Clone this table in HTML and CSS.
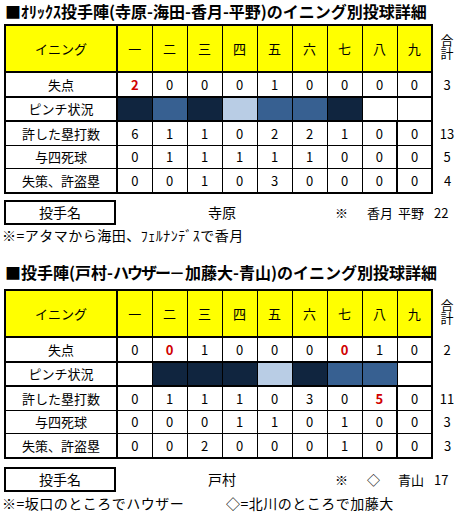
FILE: index.html
```html
<!DOCTYPE html>
<html lang="ja">
<head>
<meta charset="utf-8">
<link rel="stylesheet" href="styles.css">
</head>
<body>
<div class="page">
  <section class="block">
    <h1 class="title">■ｵﾘｯｸｽ投手陣(寺原-海田-香月-平野)のイニング別投球詳細</h1>
    <table class="g">
      <colgroup><col class="cl"><col class="cn"><col class="cn"><col class="cn"><col class="cn"><col class="cn"><col class="cn"><col class="cn"><col class="cn"><col class="cn"><col class="ct"></colgroup>
      <tr class="hd thick">
        <td class="lab">イニング</td><td>一</td><td>二</td><td>三</td><td>四</td><td>五</td><td>六</td><td>七</td><td>八</td><td class="c9">九</td><td class="tot"><span class="stack">合計</span></td>
      </tr>
      <tr class="r1 thick">
        <td class="lab">失点</td><td class="red">2</td><td>0</td><td>0</td><td>0</td><td>1</td><td>0</td><td>0</td><td>0</td><td class="c9">0</td><td class="tot">3</td>
      </tr>
      <tr class="r2 thick">
        <td class="lab">ピンチ状況</td><td class="d"></td><td class="m"></td><td class="d"></td><td class="l"></td><td class="m"></td><td class="m"></td><td class="d"></td><td></td><td class="c9"></td><td class="tot"></td>
      </tr>
      <tr class="r3">
        <td class="lab">許した塁打数</td><td>6</td><td>1</td><td>1</td><td>0</td><td>2</td><td>2</td><td>1</td><td class="c8">0</td><td class="c9">0</td><td class="tot">13</td>
      </tr>
      <tr class="r4">
        <td class="lab">与四死球</td><td>0</td><td>1</td><td>1</td><td>1</td><td>1</td><td>1</td><td>0</td><td class="c8">0</td><td class="c9">0</td><td class="tot">5</td>
      </tr>
      <tr class="r5 last">
        <td class="lab">失策、許盗塁</td><td>0</td><td>0</td><td>1</td><td>0</td><td>3</td><td>0</td><td>0</td><td class="c8">0</td><td class="c9">0</td><td class="tot">4</td>
      </tr>
    </table>
    <div class="pitchers">
      <div class="pbox">投手名</div>
      <span class="p-main">寺原</span>
      <span class="p-mark">※</span>
      <span class="p-a">香月</span>
      <span class="p-b">平野</span>
      <span class="p-tot">22</span>
    </div>
    <p class="note">※=アタマから海田、ﾌｪﾙﾅﾝﾃﾞｽで香月</p>
  </section>

  <section class="block second">
    <h1 class="title">■投手陣(戸村-<span class="narrow">ハウザー</span>－加藤大-青山)のイニング別投球詳細</h1>
    <table class="g">
      <colgroup><col class="cl"><col class="cn"><col class="cn"><col class="cn"><col class="cn"><col class="cn"><col class="cn"><col class="cn"><col class="cn"><col class="cn"><col class="ct"></colgroup>
      <tr class="hd thick">
        <td class="lab">イニング</td><td>一</td><td>二</td><td>三</td><td>四</td><td>五</td><td>六</td><td>七</td><td>八</td><td class="c9">九</td><td class="tot"><span class="stack">合計</span></td>
      </tr>
      <tr class="r1 thick">
        <td class="lab">失点</td><td>0</td><td class="red">0</td><td>1</td><td>0</td><td>0</td><td>0</td><td class="red">0</td><td>1</td><td class="c9">0</td><td class="tot">2</td>
      </tr>
      <tr class="r2 thick">
        <td class="lab">ピンチ状況</td><td></td><td class="d"></td><td class="d"></td><td class="d"></td><td class="l"></td><td class="d"></td><td class="m"></td><td class="m"></td><td class="c9"></td><td class="tot"></td>
      </tr>
      <tr class="r3">
        <td class="lab">許した塁打数</td><td>0</td><td>1</td><td>1</td><td>1</td><td>0</td><td>3</td><td>0</td><td class="c8 red">5</td><td class="c9">0</td><td class="tot">11</td>
      </tr>
      <tr class="r4">
        <td class="lab">与四死球</td><td>0</td><td>0</td><td>0</td><td>1</td><td>1</td><td>0</td><td>1</td><td class="c8">0</td><td class="c9">0</td><td class="tot">3</td>
      </tr>
      <tr class="r5 last">
        <td class="lab">失策、許盗塁</td><td>0</td><td>0</td><td>2</td><td>0</td><td>0</td><td>0</td><td>1</td><td class="c8">0</td><td class="c9">0</td><td class="tot">3</td>
      </tr>
    </table>
    <div class="pitchers">
      <div class="pbox">投手名</div>
      <span class="p-main">戸村</span>
      <span class="p-mark">※</span>
      <span class="p-a">◇</span>
      <span class="p-b">青山</span>
      <span class="p-tot">17</span>
    </div>
    <p class="note two"><span class="n1">※=坂口のところでハウザー</span><span class="n2">◇=北川のところで加藤大</span></p>
  </section>
</div>
</body>
</html>
```

FILE: styles.css
```css
html, body {
  margin: 0;
  padding: 0;
  background: #fff;
}

body {
  font-family: "Noto Sans CJK JP", "DejaVu Sans", sans-serif;
  color: #000;
  width: 461px;
}

.page {
  display: flex;
  flex-direction: column;
}

.block {
  display: flex;
  flex-direction: column;
}

.second {
  margin-top: 17px;
}

.title {
  margin: 0 0 0 5px;
  font-size: 16px;
  line-height: 23.2px;
  height: 23.2px;
  font-weight: bold;
  white-space: nowrap;
  letter-spacing: 0;
}

.narrow {
  letter-spacing: -2px;
}

.g {
  margin: 0.8px 0 0 4px;
  border-collapse: collapse;
  table-layout: fixed;
  width: 457px;
}

.second .g {
  margin-top: 4.8px;
}

.cl { width: 112px; }
.cn { width: 35px; }
.ct { width: 30px; }

.g td {
  border: 1px solid #000;
  padding: 0;
  text-align: center;
  vertical-align: middle;
  font-size: 13px;
  line-height: 15px;
}

.g tr.hd td { height: 45px; background: #ffff00; }
.g tr.r1 td { height: 23px; }
.g tr.r2 td { height: 22px; }
.g tr.r3 td { height: 23px; }
.g tr.r4 td { height: 22px; }
.g tr.r5 td { height: 23px; }

.g tr.hd td { border-top: 2px solid #000; }
.g tr.thick td { border-bottom: 2px solid #000; }
.g tr.last td { border-bottom: 2px solid #000; }
.g td.lab { border-left: 2px solid #000; border-right: 2px solid #000; }
.g td.c9 { border-right: 2px solid #000; }
.g td.c8 { border-right: 2px solid #000; }

.g tr td.tot {
  border: none;
  background: #fff;
  text-align: center;
}

.stack {
  display: inline-block;
  writing-mode: vertical-rl;
  text-orientation: upright;
  font-size: 13px;
  line-height: 15px;
}

.g td.red {
  color: #d00000;
  font-weight: bold;
}

.g td.d { background: #10253f; }
.g td.m { background: #376091; }
.g td.l { background: #b9cde5; }

.pitchers {
  display: flex;
  align-items: center;
  margin: 6px 0 0 4px;
  font-size: 14px;
  white-space: nowrap;
}

.second .pitchers {
  margin-top: 8px;
}

.pbox {
  box-sizing: border-box;
  width: 112px;
  height: 25px;
  border: 2px solid #000;
  display: flex;
  align-items: center;
  justify-content: center;
  font-size: 14px;
}

.p-main {
  width: 212px;
  text-align: center;
}

.p-mark {
  box-sizing: border-box;
  width: 39px;
  padding-left: 7px;
  font-size: 13px;
}

.p-a {
  width: 31px;
  font-size: 13px;
}

.p-b {
  width: 36px;
  font-size: 13px;
}

.p-tot {
  width: 27px;
  font-size: 13px;
}

.note {
  margin: 1px 0 0 2px;
  font-size: 14px;
  line-height: 18px;
  letter-spacing: 0.5px;
  white-space: nowrap;
}

.note.two {
  margin-top: 2px;
  display: flex;
}

.n1 {
  width: 224px;
}
```
